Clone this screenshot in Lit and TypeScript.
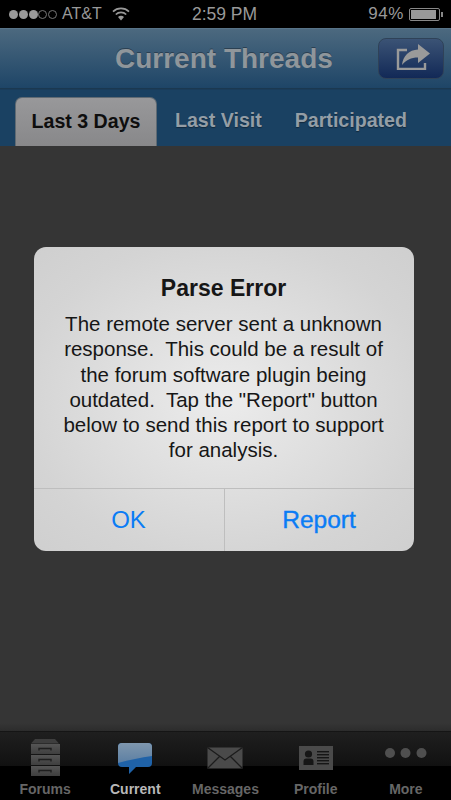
import { LitElement, html, css } from 'lit';
import { customElement } from 'lit/decorators.js';

const drawerIcon = html`<svg width="30" height="38" viewBox="0 1 30 38">
  <defs>
    <linearGradient id="drawerFill" x1="0" y1="0" x2="0" y2="1">
      <stop offset="0" stop-color="#555"/>
      <stop offset="1" stop-color="#3f3f3f"/>
    </linearGradient>
  </defs>
  <path d="M5 1h20l4 4.500H1z" fill="#3e3e3e"/>
  <g fill="url(#drawerFill)">
    <rect x="1" y="6" width="29" height="10"/>
    <rect x="1" y="17" width="29" height="10"/>
    <rect x="1" y="28" width="29" height="10"/>
  </g>
  <g fill="none" stroke="#1e1e1e" stroke-width="1.4">
    <path d="M9 12.500V10.500h12v2"/>
    <path d="M9 23.500V21.500h12v2"/>
    <path d="M9 34.500V32.500h12v2"/>
  </g>
</svg>`;

const bubbleIcon = html`<svg width="36" height="31" viewBox="0 0 36 31">
  <defs>
    <linearGradient id="bubbleTop" x1="0" y1="0" x2="0" y2="1">
      <stop offset="0" stop-color="#7f97ae"/>
      <stop offset="1" stop-color="#5c7fa3"/>
    </linearGradient>
  </defs>
  <path d="M5 0h26a4 4 0 0 1 4 4v16a4 4 0 0 1-4 4H19l-7 7v-7H5a4 4 0 0 1-4-4V4a4 4 0 0 1 4-4z" fill="#1f62a8"/>
  <path d="M5 0h26a4 4 0 0 1 4 4v9c-11 1.500-23 4-34 7V4a4 4 0 0 1 4-4z" fill="url(#bubbleTop)"/>
</svg>`;

const envelopeIcon = html`<svg width="36" height="22" viewBox="0 0 36 22">
  <rect x="0.5" y="0.5" width="35" height="21" fill="#4a4a4a"/>
  <path d="M0.500 0.500L18 13 35.500 0.500M0.500 21.500L13 9M35.500 21.500L23 9" fill="none" stroke="#1c1c1c" stroke-width="1.3"/>
</svg>`;

const profileIcon = html`<svg width="34" height="24" viewBox="0 0 34 24">
  <rect width="34" height="24" fill="#4a4a4a"/>
  <g fill="#161616">
    <circle cx="9.5" cy="8" r="3.6"/>
    <path d="M4.500 19v-3.500a3 3 0 0 1 3-3h4a3 3 0 0 1 3 3V19z"/>
    <rect x="18" y="5" width="12" height="1.4"/>
    <rect x="18" y="8" width="12" height="1.4"/>
    <rect x="18" y="11" width="12" height="1.4"/>
    <rect x="18" y="14" width="12" height="1.4"/>
    <rect x="18" y="17" width="12" height="1.4"/>
  </g>
</svg>`;

// taller than the dots so that they sit above the icon row's centre
const moreIcon = html`<svg width="42" height="20" viewBox="0 0 42 20" fill="#4f4f4f">
  <circle cx="5" cy="5" r="5"/>
  <circle cx="20.5" cy="5" r="5"/>
  <circle cx="36.5" cy="5" r="5"/>
</svg>`;

const shareIcon = html`<svg class="share-icon" width="35" height="26" viewBox="0 0 35 26">
  <path d="M11 6H2v19h27v-6" fill="none" stroke="#9a9a9a" stroke-width="2.4"/>
  <path d="M6 21C7 12 13 6 22 5.500V0l12 9.500L22 19v-5.500C15 13.500 10 16 6 21z" fill="#9a9a9a"/>
</svg>`;

const wifiIcon = html`<svg width="18" height="14" viewBox="0 0 18 14">
  <g fill="none" stroke="#999" stroke-width="1.7">
    <path d="M1 4.600a11.500 11.500 0 0 1 16 0"/>
    <path d="M3.800 7.500a7.500 7.500 0 0 1 10.400 0"/>
  </g>
  <path d="M6 10a4.200 4.200 0 0 1 6 0l-3 3.500z" fill="#999"/>
</svg>`;

const navItems = [
  { label: 'Forums', icon: drawerIcon },
  { label: 'Current', icon: bubbleIcon, active: true },
  { label: 'Messages', icon: envelopeIcon },
  { label: 'Profile', icon: profileIcon },
  { label: 'More', icon: moreIcon },
];

@customElement('app-root')
export class AppRoot extends LitElement {
  static styles = css`
    :host {
      display: flex;
      flex-direction: column;
      width: 451px;
      height: 800px;
      overflow: hidden;
      background: #353535;
      font-family: 'Liberation Sans', Arial, sans-serif;
    }
    .status {
      height: 28px;
      flex: none;
      display: grid;
      grid-template-columns: 1fr auto 1fr;
      align-items: center;
      padding: 0 11px 0 9px;
      background: #000;
      color: #999;
      font-size: 17.500px;
    }
    .status-left {
      display: flex;
      align-items: center;
    }
    .dots {
      display: flex;
      gap: 0.75px;
      margin-right: 5px;
    }
    .dot {
      width: 9px;
      height: 9px;
      box-sizing: border-box;
      border-radius: 50%;
      background: #999;
    }
    .dot.empty {
      background: none;
      border: 1px solid #777;
    }
    .carrier {
      margin-right: 10px;
      font-size: 16px;
    }
    .status-right {
      display: flex;
      align-items: center;
      justify-content: flex-end;
      gap: 5px;
      font-size: 17px;
      letter-spacing: 0.6px;
    }
    .battery {
      width: 31px;
      height: 13px;
      box-sizing: border-box;
      padding: 1px;
      border: 1px solid #888;
      border-radius: 2px;
      position: relative;
    }
    .battery::before {
      content: '';
      display: block;
      width: 94%;
      height: 100%;
      background: #999;
    }
    .battery::after {
      content: '';
      position: absolute;
      right: -4px;
      top: 3px;
      width: 2px;
      height: 5px;
      background: #888;
    }
    .nav {
      height: 61px;
      flex: none;
      box-sizing: border-box;
      display: flex;
      align-items: center;
      justify-content: space-between;
      padding: 0 7px 0 115px;
      background: linear-gradient(#4c697f, #1e4567);
      border-top: 1px solid #587488;
      border-bottom: 1px solid #1b3850;
    }
    .title {
      margin: 0;
      font-size: 28px;
      font-weight: bold;
      color: #8f969b;
      text-shadow: 0 -1px 0 #2b4052;
    }
    .share {
      width: 66px;
      height: 41px;
      box-sizing: border-box;
      display: flex;
      align-items: center;
      justify-content: center;
      padding: 0;
      border: 1px solid #2f4258;
      border-radius: 8px;
      background: linear-gradient(#3b5375, #122957);
    }
    .share-icon {
      margin: 0 0 3px 5px;
    }
    .tabs {
      height: 57px;
      flex: none;
      box-sizing: border-box;
      display: flex;
      align-items: flex-end;
      padding-left: 15px;
      background: #1a4162;
      border-top: 1px solid #1a3c5a;
    }
    .tab {
      height: 49px;
      display: flex;
      align-items: center;
      justify-content: center;
      box-sizing: border-box;
      padding-bottom: 2px;
      font-size: 19.600px;
      font-weight: bold;
      color: #949ea6;
      text-shadow: 0 1px 1px #12293d;
    }
    .tab.active {
      width: 142px;
      margin-right: 18px;
      border: 1px solid #5f6a73;
      border-bottom: none;
      border-radius: 7px 7px 0 0;
      background: linear-gradient(#98989a, #88888a);
      color: #0e0e0e;
      text-shadow: none;
    }
    .tab.visit {
      margin-right: 33px;
    }
    .content {
      flex: 1;
      box-sizing: border-box;
      display: flex;
      justify-content: center;
      align-items: flex-start;
      padding: 101px 4px 0 0;
      background: linear-gradient(#353535 calc(100% - 8px), #2c2c2c);
    }
    .alert {
      width: 380px;
      height: 304px;
      display: flex;
      flex-direction: column;
      border-radius: 12px;
      overflow: hidden;
      background: radial-gradient(ellipse at 50% 50%, #ececec 0%, #d4d4d4 75%, #cfcfcf 100%);
    }
    .alert-body {
      flex: 1;
      box-sizing: border-box;
      padding-top: 26px;
      text-align: center;
      color: #161616;
    }
    .alert-title {
      margin: 0 0 8px;
      font-size: 23px;
      line-height: 30px;
      font-weight: bold;
    }
    .alert-msg {
      margin: 0;
      font-size: 20.500px;
      line-height: 25.300px;
      white-space: pre-wrap;
    }
    .alert-actions {
      height: 62px;
      flex: none;
      display: grid;
      grid-template-columns: 190px 1fr;
      border-top: 1px solid #bebebe;
    }
    .alert-btn {
      display: flex;
      align-items: center;
      justify-content: center;
      font-size: 24px;
      color: #0a7cf5;
    }
    .alert-btn + .alert-btn {
      border-left: 1px solid #bebebe;
      font-size: 24.500px;
      -webkit-text-stroke: 0.4px #0a7cf5;
    }
    .tabbar {
      height: 69px;
      flex: none;
      box-sizing: border-box;
      display: grid;
      grid-template-columns: repeat(5, 1fr);
      background: linear-gradient(#1f1f1f 0, #111 34px, #000 34px);
      border-top: 1px solid #151515;
    }
    .item {
      display: flex;
      flex-direction: column;
      align-items: center;
      color: #666;
      font-size: 14px;
      font-weight: bold;
    }
    .item.active {
      color: #b8b8b8;
    }
    .icon {
      height: 45px;
      display: flex;
      align-items: center;
      justify-content: center;
      padding-top: 7px;
      box-sizing: border-box;
    }
    .label {
      line-height: 16px;
      margin-top: 4px;
    }
  `;

  render() {
    return html`
      <div class="status">
        <div class="status-left">
          <span class="dots">
            <i class="dot"></i><i class="dot"></i><i class="dot"></i>
            <i class="dot empty"></i><i class="dot empty"></i>
          </span>
          <span class="carrier">AT&amp;T</span>
          ${wifiIcon}
        </div>
        <span>2:59 PM</span>
        <div class="status-right">
          <span>94%</span>
          <span class="battery"></span>
        </div>
      </div>
      <header class="nav">
        <h1 class="title">Current Threads</h1>
        <button class="share">${shareIcon}</button>
      </header>
      <div class="tabs">
        <div class="tab active">Last 3 Days</div>
        <div class="tab visit">Last Visit</div>
        <div class="tab">Participated</div>
      </div>
      <main class="content">
        <div class="alert">
          <div class="alert-body">
            <h2 class="alert-title">Parse Error</h2>
            <p class="alert-msg">The remote server sent a unknown
response.  This could be a result of
the forum software plugin being
outdated.  Tap the "Report" button
below to send this report to support
for analysis.</p>
          </div>
          <div class="alert-actions">
            <div class="alert-btn">OK</div>
            <div class="alert-btn">Report</div>
          </div>
        </div>
      </main>
      <nav class="tabbar">
        ${navItems.map(
          (n) => html`
            <div class="item ${n.active ? 'active' : ''}">
              <div class="icon">${n.icon}</div>
              <span class="label">${n.label}</span>
            </div>
          `
        )}
      </nav>
    `;
  }
}
